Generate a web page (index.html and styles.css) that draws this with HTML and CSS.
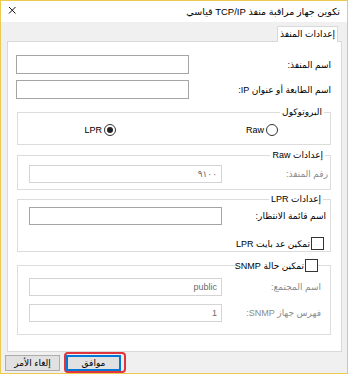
FILE: index.html
```html
<!DOCTYPE html>
<html lang="ar" dir="rtl">
<head>
    <meta charset="UTF-8">
    <title>تكوين جهاز مراقبة منفذ TCP/IP قياسي</title>
    <link rel="stylesheet" href="styles.css">
</head>
<body>
    <div class="window">
        <div class="titlebar">
            <span class="title">تكوين جهاز مراقبة منفذ TCP/IP قياسي</span>
            <svg class="close" width="10" height="10" viewBox="0 0 10 10">
                <path d="M2 2 L8.5 8.5 M8.5 2 L2 8.5" stroke="#111" stroke-width="1" fill="none"/>
            </svg>
        </div>

        <div class="tabs">
            <span class="tab">إعدادات المنفذ</span>
        </div>

        <div class="panel">
            <div class="row">
                <label>اسم المنفذ:</label>
                <input type="text" class="field wide">
            </div>
            <div class="row">
                <label>اسم الطابعة أو عنوان IP:</label>
                <input type="text" class="field wide">
            </div>

            <fieldset class="group protocol">
                <legend>البروتوكول</legend>
                <div class="radios">
                    <span class="radio"><span class="dot"></span>Raw</span>
                    <span class="radio"><span class="dot on"></span>LPR</span>
                </div>
            </fieldset>

            <fieldset class="group raw">
                <legend>إعدادات Raw</legend>
                <div class="row disabled">
                    <label>رقم المنفذ:</label>
                    <input type="text" class="field" value="٩١٠٠" disabled>
                </div>
            </fieldset>

            <fieldset class="group lpr">
                <legend>إعدادات LPR</legend>
                <div class="row">
                    <label>اسم قائمة الانتظار:</label>
                    <input type="text" class="field">
                </div>
                <div class="check"><span class="box"></span>تمكين عد بايت LPR</div>
            </fieldset>

            <fieldset class="group snmp">
                <legend><span class="check"><span class="box"></span>تمكين حالة SNMP</span></legend>
                <div class="row disabled">
                    <label>اسم المجتمع:</label>
                    <input type="text" class="field" value="public" disabled>
                </div>
                <div class="row disabled">
                    <label>فهرس جهاز SNMP:</label>
                    <input type="text" class="field" value="1" disabled>
                </div>
            </fieldset>
        </div>

        <div class="footer">
            <span class="highlight"><button class="btn default">موافق</button></span>
            <button class="btn">إلغاء الأمر</button>
        </div>
    </div>
</body>
</html>
```

FILE: styles.css
```css
body {
    margin: 0;
    font-family: "Liberation Sans", "DejaVu Sans", sans-serif;
    font-size: 9px;
    color: #000;
}

.window {
    width: 348px;
    height: 374px;
    box-sizing: border-box;
    border: 1px solid #ecc94f;
    background: #f0f0f0;
    display: flex;
    flex-direction: column;
}

.titlebar {
    height: 21px;
    background: #fff;
    display: flex;
    align-items: center;
    justify-content: space-between;
    padding: 0 7px 0 6px;
}

.title {
    font-size: 9.5px;
}

.close {
    margin-top: -3px;
}

/* tab strip */
.tabs {
    height: 20px;
    display: flex;
    align-items: flex-end;
    padding-right: 4px;
    margin-right: 5px;
}

.tab {
    height: 15px;
    line-height: 14px;
    padding: 0 2px;
    background: #fff;
    border: 1px solid #d9d9d9;
    border-bottom: none;
    margin-bottom: -1px;
    position: relative;
}

.panel {
    height: 302px;
    margin: 0 5px 0 6px;
    background: #fff;
    border: 1px solid #d9d9d9;
    padding: 13px 10px 0 9px;
}

.row {
    display: flex;
    align-items: center;
    justify-content: space-between;
    margin-bottom: 6px;
}

.field {
    width: 193px;
    height: 18px;
    box-sizing: border-box;
    border: 1px solid #a5a5a5;
    background: #fff;
    padding: 0 4px;
    font-family: inherit;
    font-size: 9px;
    text-align: right;
    outline: none;
}

.field.wide {
    width: 173px;
    height: 19px;
    margin-left: -1px;
}

.field:disabled {
    border-color: #d4d4d4;
    color: #6d6d6d;
}

.disabled label {
    color: #8c8c8c;
}

/* group boxes */
.group {
    margin: 1px 0 0 0;
    padding: 0 2px 0 11px;
    border: 1px solid #dcdcdc;
}

.group legend {
    padding: 0 2px;
    margin-right: 3px;
    line-height: 14px;
}

.group .row {
    margin-bottom: 0;
}

.protocol {
    padding-bottom: 8px;
}

.protocol legend {
    margin-right: 4px;
}

.radios {
    display: flex;
    gap: 130px;
    padding-right: 50px;
    margin-top: 5px;
}

.radio {
    display: flex;
    align-items: center;
    gap: 2px;
    height: 12px;
}

.dot {
    width: 10px;
    height: 10px;
    border: 1px solid #333;
    border-radius: 50%;
    display: flex;
    align-items: center;
    justify-content: center;
}

.dot.on::after {
    content: "";
    width: 6px;
    height: 6px;
    border-radius: 50%;
    background: #222;
}

.raw {
    margin-top: 3px;
    padding-top: 3px;
    padding-bottom: 6px;
}

.lpr {
    margin-top: 2px;
    padding-top: 1px;
    padding-right: 4px;
    padding-bottom: 1px;
}

.lpr .check {
    margin-top: 12px;
    margin-right: 2px;
}

.check {
    display: flex;
    align-items: center;
    gap: 1px;
    height: 13px;
}

.box {
    width: 11px;
    height: 11px;
    border: 1px solid #333;
    background: #fff;
}

.snmp {
    margin-top: 7px;
    padding-top: 6px;
    padding-right: 9px;
    padding-bottom: 12px;
}

.snmp legend {
    margin-right: 3px;
    padding: 0;
}

.snmp .row + .row {
    margin-top: 8px;
}

/* buttons */
.footer {
    flex: 1;
    display: flex;
    align-items: center;
    justify-content: flex-end;
    gap: 4px;
    padding-left: 4px;
}

.btn {
    width: 55px;
    height: 16px;
    padding: 0;
    font-family: inherit;
    font-size: 9px;
    color: #000;
    background: #e1e1e1;
    border: 1px solid #adadad;
}

.btn.default {
    border-color: #0078d7;
    box-shadow: inset 0 0 0 1px #0078d7;
}

.highlight {
    display: flex;
    border: 2px solid #e0353c;
    border-radius: 4px;
    padding: 1px 3px 0 0;
}
```
